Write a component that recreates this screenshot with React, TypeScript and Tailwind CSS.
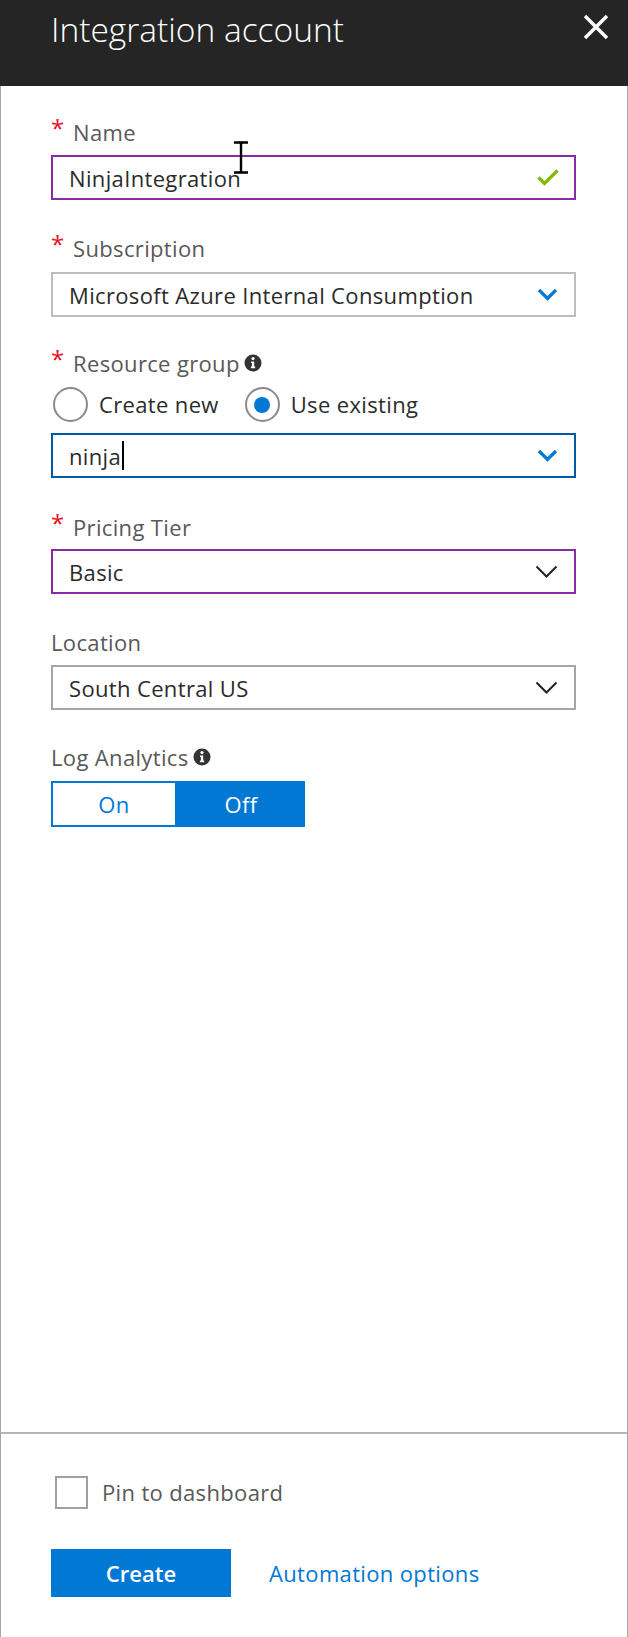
import React from 'react';

const font = { fontFamily: '"Open Sans", "Noto Sans", Arial, sans-serif' };

const Chevron = ({ blue }: { blue?: boolean }) =>
    blue ? (
        <svg width="21" height="13" viewBox="0 0 21 13" className="shrink-0">
            <path d="M2 2 L10.5 10.5 L19 2" fill="none" stroke="#0078d4" strokeWidth="3.2" />
        </svg>
    ) : (
        <svg width="23" height="14" viewBox="0 0 23 14" className="shrink-0">
            <path d="M1.5 1.5 L11.5 11.5 L21.5 1.5" fill="none" stroke="#222" strokeWidth="2" />
        </svg>
    );

const InfoIcon = () => (
    <svg width="18" height="18" viewBox="0 0 18 18" className="ml-[4px] shrink-0">
        <circle cx="9" cy="9" r="8.5" fill="#333" />
        <circle cx="9" cy="4.6" r="1.6" fill="#fff" />
        <path d="M7 7.4 H10.2 V12.6 H11.2 V14.2 H6.9 V12.6 H7.9 V9 H7 Z" fill="#fff" />
    </svg>
);

const Label = ({ text, required, info }: { text: string; required?: boolean; info?: boolean }) => (
    <div className="flex items-center h-[28px] leading-[28px] text-[22px] tracking-[0.35px] text-[#595959]">
        {required && <span className="text-[#e81123] text-[24px] w-[22px] leading-none -mt-[8px]">*</span>}
        <span>{text}</span>
        {info && <InfoIcon />}
    </div>
);

const Box = ({ border, children }: { border: string; children: React.ReactNode }) => (
    <div className={`flex items-center justify-between h-[45px] border-2 pl-[16px] pr-[16px] text-[22px] tracking-[0.35px] leading-[28px] text-[#2b2b2b] ${border}`}>
        {children}
    </div>
);

export default function App() {
    return (
        <div className="relative w-[628px] h-[1637px] flex flex-col bg-white" style={font}>
            {/* header */}
            <div className="h-[86px] shrink-0 bg-[#252525] flex items-start justify-between pl-[51px] pr-[19px]">
                <h1 className="text-[33.5px] font-light text-white leading-[46px] mt-[6px]">Integration account</h1>
                <svg width="26" height="26" viewBox="0 0 26 26" className="mt-[14px]">
                    <path d="M2 2 L24 24 M24 2 L2 24" stroke="#fff" strokeWidth="3.4" />
                </svg>
            </div>

            <div className="flex-1 flex flex-col border-x border-[#a8a8a8]">
                <div className="flex-1 pl-[50px] pr-[51px] pt-[32px]">
                    <Label text="Name" required />
                    <div className="mt-[9px]">
                        <Box border="border-[#8a2ba6]">
                            <span>NinjaIntegration</span>
                            <svg width="22" height="17" viewBox="0 0 22 17" className="-mr-[1px]">
                                <path d="M1.5 8.5 L7.5 14.5 L20.5 1.5" fill="none" stroke="#7fba00" strokeWidth="3.2" />
                            </svg>
                        </Box>
                    </div>

                    <div className="mt-[34px]">
                        <Label text="Subscription" required />
                    </div>
                    <div className="mt-[10px]">
                        <Box border="border-[#bdbdbd]">
                            <span>Microsoft Azure Internal Consumption</span>
                            <Chevron blue />
                        </Box>
                    </div>

                    <div className="mt-[32px]">
                        <Label text="Resource group" required info />
                    </div>
                    <div className="mt-[10px] flex items-center h-[35px] text-[22px] tracking-[0.35px] text-[#2b2b2b]">
                        <span className="ml-[2px] w-[35px] h-[35px] rounded-full border-2 border-[#8a8a8a]" />
                        <span className="ml-[11px]">Create new</span>
                        <span className="ml-[26px] w-[35px] h-[35px] rounded-full border-2 border-[#8a8a8a] flex items-center justify-center">
                            <span className="w-[16px] h-[16px] rounded-full bg-[#0078d4]" />
                        </span>
                        <span className="ml-[11px]">Use existing</span>
                    </div>
                    <div className="mt-[11px]">
                        <Box border="border-[#005ba1]">
                            <span className="flex items-center">
                                ninja
                                <span className="inline-block w-[2px] h-[29px] bg-black ml-[1px]" />
                            </span>
                            <Chevron blue />
                        </Box>
                    </div>

                    <div className="mt-[35px]">
                        <Label text="Pricing Tier" required />
                    </div>
                    <div className="mt-[8px]">
                        <Box border="border-[#8a2ba6]">
                            <span>Basic</span>
                            <Chevron />
                        </Box>
                    </div>

                    <div className="mt-[34px]">
                        <Label text="Location" />
                    </div>
                    <div className="mt-[9px]">
                        <Box border="border-[#a6a6a6]">
                            <span>South Central US</span>
                            <Chevron />
                        </Box>
                    </div>

                    <div className="mt-[33px]">
                        <Label text="Log Analytics" info />
                    </div>
                    <div className="mt-[10px] flex h-[46px] w-[254px] text-[22px] tracking-[0.35px]">
                        <div className="w-[126px] border-2 border-[#0078d4] flex items-center justify-center text-[#0078d4]">On</div>
                        <div className="w-[128px] bg-[#0078d4] flex items-center justify-center text-white">Off</div>
                    </div>
                </div>

                {/* footer */}
                <div className="h-[205px] shrink-0 border-t-2 border-[#b4b4b4] pl-[50px] pt-[42px]">
                    <div className="flex items-center ml-[4px]">
                        <span className="w-[33px] h-[33px] border-2 border-[#a0a0a0]" />
                        <span className="ml-[14px] text-[22px] tracking-[0.35px] text-[#595959]">Pin to dashboard</span>
                    </div>
                    <div className="mt-[40px] flex items-center">
                        <button className="w-[180px] h-[48px] bg-[#0078d4] text-white text-[22px] font-semibold">Create</button>
                        <span className="ml-[38px] text-[22px] tracking-[0.35px] text-[#0078d4]">Automation options</span>
                    </div>
                </div>
            </div>

            {/* mouse text cursor */}
            <svg width="16" height="33" viewBox="0 0 16 33" className="absolute left-[233px] top-[141px]">
                <path d="M1 1.5 H6.5 M9.5 1.5 H15 M8 2 V31 M1 31.5 H6.5 M9.5 31.5 H15" stroke="#000" strokeWidth="2.4" />
                <path d="M6 1.5 H10 M6 31.5 H10" stroke="#000" strokeWidth="2.4" />
            </svg>
        </div>
    );
}
